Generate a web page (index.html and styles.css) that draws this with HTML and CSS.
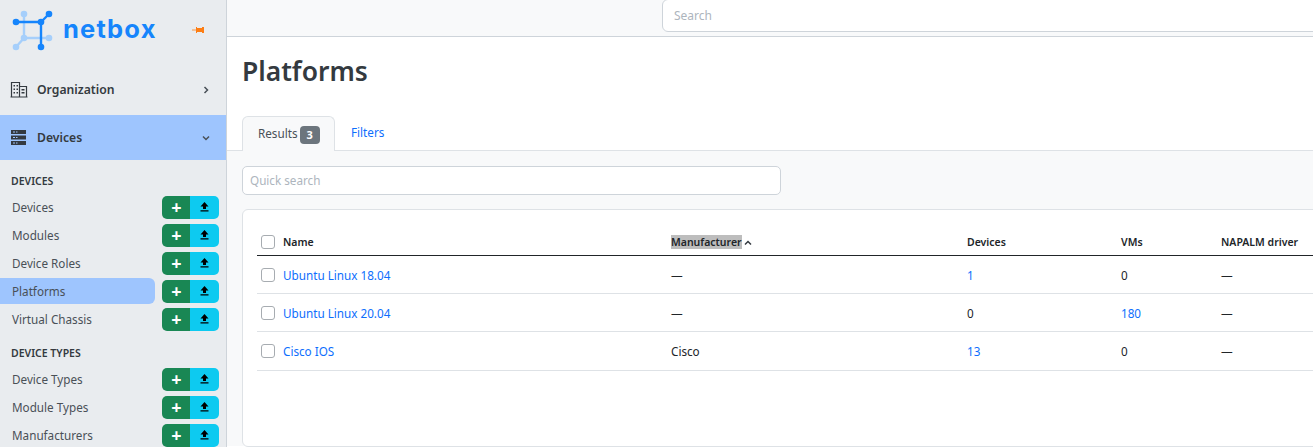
FILE: index.html
```html
<!DOCTYPE html>
<html lang="en">
<head>
<meta charset="utf-8">
<title>Platforms</title>
<link rel="stylesheet" href="styles.css">
</head>
<body>
<aside class="sidebar">
  <div class="brand">
    <svg class="logo" width="60" height="56" viewBox="0 0 60 56">
      <g class="logo-light">
        <path d="M24 14V38M24 38H49M24 38L16 47"/>
        <circle cx="24" cy="14" r="3.300"/><circle cx="49" cy="38" r="3.300"/><circle cx="16" cy="47" r="3.300"/><circle cx="24" cy="38" r="3.300"/>
      </g>
      <g class="logo-dark">
        <path d="M16 22H41M41 22L49 14M41 22V47"/>
        <circle cx="16" cy="22" r="3.300"/><circle cx="41" cy="22" r="3.300"/><circle cx="49" cy="14" r="3.300"/><circle cx="41" cy="47" r="3.300"/>
      </g>
    </svg>
    <span class="brand-name">netbox</span>
    <svg class="pin" width="12" height="8" viewBox="0 0 12 8"><path d="M0 3.600H4V4.400H0Z"/><path d="M4 1H5V2H10V1H12V7H10V6H5V7H4Z"/></svg>
  </div>
  <div class="menu-head">
    <svg class="menu-icon" width="18" height="17" viewBox="0 0 18 17"><path class="ico-line" d="M1.500 16V1.500H9.500V16M9.500 5.500H16.500V16M0.500 16H17.500"/><path class="ico-dots" d="M3.500 4h1.500v1.500h-1.500zM6.500 4h1.500v1.500h-1.500zM3.500 7.500h1.500v1.500h-1.500zM6.500 7.500h1.500v1.500h-1.500zM3.500 11h1.500v1.500h-1.500zM6.500 11h1.500v1.500h-1.500zM11.500 8h3v1.400h-3zM11.500 11h3v1.400h-3z"/></svg>
    <span class="menu-title">Organization</span>
    <svg class="chev" width="8" height="10" viewBox="0 0 8 10"><path d="M2.500 2L5.500 5L2.500 8"/></svg>
  </div>
  <div class="menu-head menu-head-active">
    <svg class="menu-icon" width="18" height="17" viewBox="0 0 18 17"><path class="ico-fill" fill-rule="evenodd" d="M1 1h15v4H1zM3 2.500v1h2v-1zM6 2.500v1h1.500v-1zM1 6.500h15v4H1zM3 8v1h2V8zM6 8v1h1.500V8zM1 12h15v4H1zM3 13.500v1h2v-1zM6 13.500v1h1.500v-1z"/></svg>
    <span class="menu-title">Devices</span>
    <svg class="chev" width="8" height="10" viewBox="0 0 8 10"><path d="M1 3.500L4 6.500L7 3.500"/></svg>
  </div>
  <div class="group-label first">DEVICES</div>
  <div class="item"><span class="item-link">Devices</span><span class="btns"><span class="btn-add">+</span><span class="btn-up"><svg width="9" height="10" viewBox="0 0 9 10"><path d="M4.500 0L8.500 4.500H6V7H3V4.500H0.500Z"/><path d="M0.500 8.300H8.500V9.500H0.500Z"/></svg></span></span></div>
  <div class="item"><span class="item-link">Modules</span><span class="btns"><span class="btn-add">+</span><span class="btn-up"><svg width="9" height="10" viewBox="0 0 9 10"><path d="M4.500 0L8.500 4.500H6V7H3V4.500H0.500Z"/><path d="M0.500 8.300H8.500V9.500H0.500Z"/></svg></span></span></div>
  <div class="item"><span class="item-link">Device Roles</span><span class="btns"><span class="btn-add">+</span><span class="btn-up"><svg width="9" height="10" viewBox="0 0 9 10"><path d="M4.500 0L8.500 4.500H6V7H3V4.500H0.500Z"/><path d="M0.500 8.300H8.500V9.500H0.500Z"/></svg></span></span></div>
  <div class="item"><span class="item-link item-active">Platforms</span><span class="btns"><span class="btn-add">+</span><span class="btn-up"><svg width="9" height="10" viewBox="0 0 9 10"><path d="M4.500 0L8.500 4.500H6V7H3V4.500H0.500Z"/><path d="M0.500 8.300H8.500V9.500H0.500Z"/></svg></span></span></div>
  <div class="item"><span class="item-link">Virtual Chassis</span><span class="btns"><span class="btn-add">+</span><span class="btn-up"><svg width="9" height="10" viewBox="0 0 9 10"><path d="M4.500 0L8.500 4.500H6V7H3V4.500H0.500Z"/><path d="M0.500 8.300H8.500V9.500H0.500Z"/></svg></span></span></div>
  <div class="group-label">DEVICE TYPES</div>
  <div class="item"><span class="item-link">Device Types</span><span class="btns"><span class="btn-add">+</span><span class="btn-up"><svg width="9" height="10" viewBox="0 0 9 10"><path d="M4.500 0L8.500 4.500H6V7H3V4.500H0.500Z"/><path d="M0.500 8.300H8.500V9.500H0.500Z"/></svg></span></span></div>
  <div class="item"><span class="item-link">Module Types</span><span class="btns"><span class="btn-add">+</span><span class="btn-up"><svg width="9" height="10" viewBox="0 0 9 10"><path d="M4.500 0L8.500 4.500H6V7H3V4.500H0.500Z"/><path d="M0.500 8.300H8.500V9.500H0.500Z"/></svg></span></span></div>
  <div class="item"><span class="item-link">Manufacturers</span><span class="btns"><span class="btn-add">+</span><span class="btn-up"><svg width="9" height="10" viewBox="0 0 9 10"><path d="M4.500 0L8.500 4.500H6V7H3V4.500H0.500Z"/><path d="M0.500 8.300H8.500V9.500H0.500Z"/></svg></span></span></div>
</aside>
<main class="main">
  <header class="topbar"><div class="global-search">Search</div></header>
  <h1 class="page-title">Platforms</h1>
  <nav class="tabs">
    <div class="tab tab-active">Results <span class="badge">3</span></div>
    <div class="tab tab-link">Filters</div>
  </nav>
  <section class="pane">
    <div class="quick-search">Quick search</div>
    <div class="card">
      <table class="table">
        <colgroup><col class="c-check"><col class="c-name"><col class="c-manu"><col class="c-dev"><col class="c-vms"><col class="c-nap"></colgroup>
        <thead>
          <tr><th><span class="check"></span></th><th>Name</th><th><span class="selected">Manufacturer</span><svg class="sort" width="8" height="6" viewBox="0 0 8 6"><path d="M1 4.500L4 1.500L7 4.500"/></svg></th><th>Devices</th><th>VMs</th><th>NAPALM driver</th></tr>
        </thead>
        <tbody>
          <tr><td><span class="check"></span></td><td><a class="link">Ubuntu Linux 18.04</a></td><td>—</td><td><a class="link">1</a></td><td>0</td><td>—</td></tr>
          <tr><td><span class="check"></span></td><td><a class="link">Ubuntu Linux 20.04</a></td><td>—</td><td>0</td><td><a class="link">180</a></td><td>—</td></tr>
          <tr><td><span class="check"></span></td><td><a class="link">Cisco IOS</a></td><td>Cisco</td><td><a class="link">13</a></td><td>0</td><td>—</td></tr>
        </tbody>
      </table>
    </div>
  </section>
</main>
</body>
</html>
```

FILE: styles.css
```css
* { box-sizing: border-box; }
html, body { margin: 0; height: 447px; overflow: hidden; }
body {
  display: flex;
  font-family: "Noto Sans", "Open Sans", sans-serif;
  font-size: 11.7px;
  color: #212529;
  background: #fff;
}
.sidebar {
  flex: 0 0 227px;
  height: 447px;
  background: #e9ecef;
  border-right: 1px solid #ced4da;
  overflow: hidden;
}
.brand { height: 64px; display: flex; align-items: flex-start; position: relative; }
.logo { flex: none; }
.brand-name {
  margin: 11px 0 0 3px;
  font-family: Inter, sans-serif;
  font-weight: 700;
  font-size: 25.500px;
  line-height: 36px;
  letter-spacing: 1.200px;
  color: #1685fc;
}
.logo-light path { stroke: #a6cffb; stroke-width: 2.400; fill: none; }
.logo-light circle { fill: #a6cffb; }
.logo-dark path { stroke: #1685fc; stroke-width: 2.400; fill: none; }
.logo-dark circle { fill: #1685fc; }
.pin { position: absolute; left: 192px; top: 26px; fill: #fd7e14; }
.menu-head {
  height: 51px;
  display: flex;
  align-items: center;
  padding: 0 16px 0 10px;
  color: #343a40;
}
.menu-head-active { height: 45px; background: #9ec5fe; }
.menu-icon { flex: none; }
.ico-line { fill: none; stroke: #343a40; stroke-width: 1.200; }
.ico-dots, .ico-fill { fill: #343a40; }
.menu-title { flex: 1; margin-left: 9px; font-weight: 600; font-size: 12.200px; }
.chev { fill: none; stroke: #495057; stroke-width: 1.500; }
.group-label {
  margin: 11px 0 0 11px;
  height: 21px;
  line-height: 18px;
  font-size: 10.500px;
  font-weight: 600;
  color: #343a40;
}
.group-label.first { margin-top: 12px; }
.item {
  height: 28px;
  display: flex;
  align-items: center;
  justify-content: space-between;
  padding-right: 7px;
  color: #495057;
}
.item-link {
  flex: 0 0 155px;
  height: 26px;
  line-height: 27px;
  padding-left: 12px;
  border-radius: 0 6px 6px 0;
}
.item-active { background: #9ec5fe; }
.btns { display: flex; width: 57px; height: 23px; border-radius: 5px; overflow: hidden; }
.btn-add, .btn-up { display: flex; align-items: center; justify-content: center; }
.btn-add { flex: 0 0 28px; padding-left: 1px; background: #198754; color: #fff; font-size: 18px; font-weight: 700; line-height: 22px; }
.btn-up { flex: 1; background: #0dcaf0; }
.btn-up svg { fill: #000; }
.main { flex: 1; min-width: 0; height: 447px; overflow: hidden; }
.topbar {
  height: 38px;
  background: #f8f9fa;
  border-bottom: 1px solid #ced4da;
  padding-left: 435px;
}
.global-search {
  width: 700px;
  height: 33px;
  margin-top: -1px;
  line-height: 31px;
  padding-left: 11px;
  background: #fff;
  border: 1px solid #ced4da;
  border-radius: 6px;
  color: #adb5bd;
  font-size: 12px;
}
.page-title {
  margin: 0;
  padding: 16px 0 0 15px;
  height: 79px;
  font-size: 26.400px;
  line-height: 37px;
  font-weight: 600;
  color: #343a40;
}
.tabs {
  display: flex;
  padding-left: 15px;
  height: 35px;
  border-bottom: 1px solid #dee2e6;
}
.tab { padding: 0 16px; line-height: 33px; }
.tab-active {
  height: 35px;
  width: 93px;
  background: #f8f9fa;
  border: 1px solid #dee2e6;
  border-bottom: 0;
  border-radius: 6px 6px 0 0;
  color: #495057;
  padding: 0 15px;
  line-height: 33px;
  white-space: nowrap;
}
.tab-link { color: #0d6efd; }
.badge {
  display: inline-block;
  width: 20px;
  height: 18px;
  line-height: 18px;
  margin-left: -1px;
  text-align: center;
  background: #6c757d;
  color: #fff;
  border-radius: 4px;
  font-size: 11px;
  font-weight: 700;
  vertical-align: -1px;
}
.pane { background: #f8f9fa; padding: 15px 0 0 15px; height: 295px; }
.quick-search {
  width: 539px;
  height: 29px;
  line-height: 27px;
  padding-left: 7px;
  background: #fff;
  border: 1px solid #ced4da;
  border-radius: 5px;
  color: #adb5bd;
}
.card {
  margin-top: 14px;
  width: 1200px;
  height: 238px;
  padding: 7px 14px;
  background: #fff;
  border: 1px solid #dee2e6;
  border-radius: 6px;
}
.table { table-layout: fixed; border-collapse: collapse; width: 1150px; }
.c-check { width: 26px; }
.c-name { width: 388px; }
.c-manu { width: 296px; }
.c-dev { width: 154px; }
.c-vms { width: 100px; }
.table th, .table td { padding: 0; text-align: left; }
.table th { height: 38px; font-size: 10.500px; font-weight: 600; border-bottom: 1px solid #212529; padding-top: 12px; }
.table td { height: 38px; padding-top: 2px; border-bottom: 1px solid #dee2e6; }
.table tr:last-child td { height: 39px; padding-top: 1px; }
.check {
  display: block;
  width: 14px;
  height: 14px;
  margin-left: 4px;
  background: #fff;
  border: 1px solid #a7acb1;
  border-radius: 3px;
}
.link { color: #0d6efd; }
.selected { background: #bdbdbd; }
.sort { margin-left: 2px; fill: none; stroke: #343a40; stroke-width: 1.500; }
```
